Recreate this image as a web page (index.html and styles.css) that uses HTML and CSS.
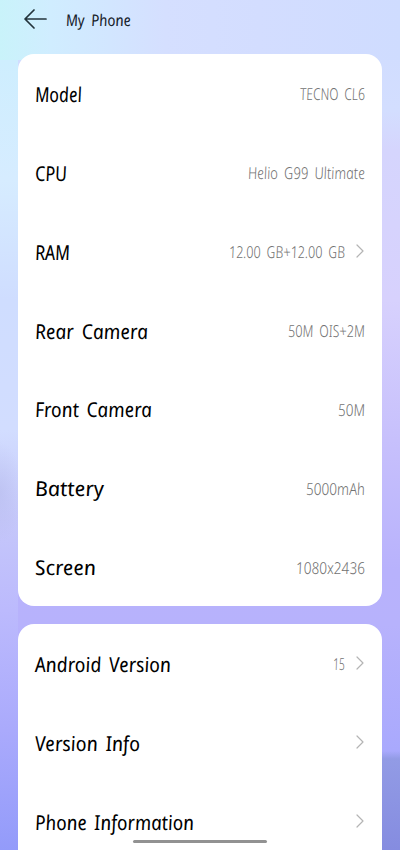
FILE: index.html
```html
<!DOCTYPE html>
<html lang="en">
<head>
<meta charset="utf-8">
<title>My Phone</title>
<link rel="stylesheet" href="styles.css">
</head>
<body>
<div class="screen">
  <header class="bar">
    <svg class="back" viewBox="0 0 24 20" fill="none"><path d="M10 1 1 10l9 9M1.4 10H22"/></svg>
    <h1 class="title"><span class="fit" data-w="65">My Phone</span></h1>
  </header>
  <main class="cards">
    <section class="card">
      <div class="row"><div class="label"><span class="fit" data-w="47">Model</span></div><div class="value"><span class="fit" data-w="65">TECNO CL6</span></div></div>
      <div class="row"><div class="label"><span class="fit" data-w="32">CPU</span></div><div class="value"><span class="fit" data-w="117">Helio G99 Ultimate</span></div></div>
      <div class="row"><div class="label"><span class="fit" data-w="35">RAM</span></div><div class="value"><span class="fit" data-w="116">12.00 GB+12.00 GB</span></div><svg class="chevron" viewBox="0 0 8 14" fill="none"><path d="m1 1 6 6-6 6"/></svg></div>
      <div class="row"><div class="label"><span class="fit" data-w="113">Rear Camera</span></div><div class="value"><span class="fit" data-w="77">50M OIS+2M</span></div></div>
      <div class="row"><div class="label"><span class="fit" data-w="117">Front Camera</span></div><div class="value"><span class="fit" data-w="27">50M</span></div></div>
      <div class="row"><div class="label"><span class="fit" data-w="69">Battery</span></div><div class="value"><span class="fit" data-w="59">5000mAh</span></div></div>
      <div class="row"><div class="label"><span class="fit" data-w="61">Screen</span></div><div class="value"><span class="fit" data-w="69">1080x2436</span></div></div>
    </section>
    <section class="card card-last">
      <div class="row"><div class="label"><span class="fit" data-w="136">Android Version</span></div><div class="value"><span class="fit" data-w="12">15</span></div><svg class="chevron" viewBox="0 0 8 14" fill="none"><path d="m1 1 6 6-6 6"/></svg></div>
      <div class="row"><div class="label"><span class="fit" data-w="105">Version Info</span></div><svg class="chevron" viewBox="0 0 8 14" fill="none"><path d="m1 1 6 6-6 6"/></svg></div>
      <div class="row"><div class="label"><span class="fit" data-w="159">Phone Information</span></div><svg class="chevron" viewBox="0 0 8 14" fill="none"><path d="m1 1 6 6-6 6"/></svg></div>
    </section>
  </main>
  <div class="home"></div>
</div>
<script src="script.js"></script>
</body>
</html>
```
FILE: styles.css
```css
* { box-sizing: border-box; }
body {
  margin: 0;
  font-family: "Noto Sans", "Open Sans", sans-serif;
  font-style: italic;
}
.screen {
  position: relative;
  width: 400px;
  height: 850px;
  overflow: hidden;
  background:
    radial-gradient(ellipse 22px 50px at 0 492px, rgba(175, 180, 230, .4), rgba(175, 180, 230, 0)),
    linear-gradient(to bottom, transparent 751px, #929be5 759px, #858ce0) 382px 0 / 18px 850px no-repeat,
    linear-gradient(to right, #c9f3fa, #d0edff 50px, #d2e6ff 110px, #d5dfff 165px, #d3ddff 260px, #cfdcff) 0 0 / 400px 60px no-repeat,
    linear-gradient(to bottom, #ceeefe 60px, #d6ecff 180px, #cfddff 300px, #d2ddff 430px, #c5c7fa 520px, #bcbafd 610px, #aaaafc 730px, #939bfa) 0 0 / 18px 850px no-repeat,
    linear-gradient(to bottom, #cfdcff, #d3deff 110px, #d5d5fd 150px, #d7d1fd 300px, #c7c0fc 440px, #b8b2fc 570px, #b7b2fc 625px, #a9a9fd 750px, #9aa0f5);
}
.bar {
  display: flex;
  align-items: center;
  height: 54px;
  padding: 0 0 17px 24px;
}
.back { width: 24px; height: 20px; stroke: #24343c; stroke-width: 1.7; stroke-linecap: round; stroke-linejoin: round; }
.title {
  margin: 3px 0 0 18px;
  font-size: 16px;
  font-weight: 400;
  line-height: 24px;
  color: #17212a;
}
.cards { display: flex; flex-direction: column; gap: 18px; padding: 0 18px; }
.card {
  padding: 0 17.5px 0 17px;
  border-radius: 16px;
  background: #fff;
}
.card-last { padding-bottom: 40px; }
.row {
  display: flex;
  align-items: center;
  height: 78.86px;
}
.label {
  flex: 1;
  padding-top: 1px;
  font-size: 20.5px;
  font-weight: 450;
  line-height: 28px;
  color: #000;
}
.value {
  padding-top: 2px;
  font-size: 16.5px;
  font-weight: 300;
  line-height: 24px;
  color: #727272;
}
.fit { display: inline-block; white-space: nowrap; word-spacing: 3px; transform-origin: 0 60%; }
.chevron {
  width: 8px;
  height: 14px;
  margin: 0 1px 0 11px;
  stroke: #b4b4b4;
  stroke-width: 1.2;
  stroke-linecap: round;
  stroke-linejoin: round;
}
.home {
  position: absolute;
  left: 133px;
  bottom: 7px;
  width: 134px;
  height: 3px;
  border-radius: 2px;
  background: #929292;
}
```
FILE: script.js
```js
document.querySelectorAll('.fit').forEach(function (el) {
  var target = Number(el.dataset.w);
  var natural = el.getBoundingClientRect().width;
  el.style.transform = 'scaleX(' + target / natural + ') skewX(9deg)';
  el.style.width = natural + 'px';
  el.style.marginRight = target - natural + 'px';
});
```
